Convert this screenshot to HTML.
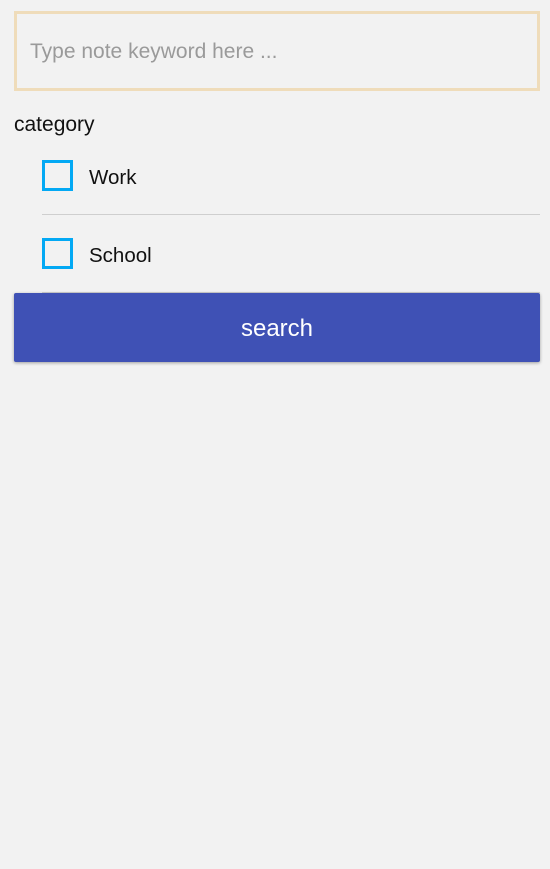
<!DOCTYPE html>
<html><head><style>
body{margin:0;width:550px;height:869px;background:#f2f2f2;font-family:"Liberation Sans",sans-serif;position:relative;overflow:hidden}
.a{position:absolute}
.input{left:14px;top:11px;width:520px;height:74px;border:3px solid #efdcba;}
.ph{left:30px;top:40px;font-size:21px;color:#9a9a9a}
.cat{left:14px;top:113px;font-size:21px;color:#111}
.cb{width:25px;height:25px;border:3px solid #03a9f4;left:42px}
.lbl{left:89px;font-size:20.5px;color:#111}
.div{left:42px;width:498px;height:1px;background:#cfcfcf}
.btn{left:14px;top:293px;width:526px;height:69px;background:#3f51b5;border-radius:2px;box-shadow:0 1px 3px rgba(0,0,0,.35);color:#fff;font-size:24px;text-align:center;line-height:72px}
</style></head><body>
<div class="a input"></div>
<div class="a ph">Type note keyword here ...</div>
<div class="a cat">category</div>
<div class="a cb" style="top:160px"></div>
<div class="a lbl" style="top:166px">Work</div>
<div class="a div" style="top:214px"></div>
<div class="a cb" style="top:238px"></div>
<div class="a lbl" style="top:244px">School</div>
<div class="a div" style="top:292px"></div>
<div class="a btn">search</div>
</body></html>
